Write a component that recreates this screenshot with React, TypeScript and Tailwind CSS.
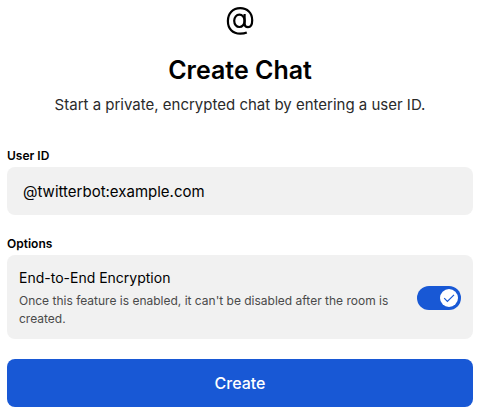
import {useState} from 'react';
import type {FormEvent} from 'react';

function MentionIcon() {
    return (
        <svg width="28" height="28" viewBox="0 0 28 28" fill="none" stroke="currentColor" strokeWidth="2.2" aria-hidden="true">
            <ellipse cx="13.4" cy="13.8" rx="5.2" ry="6.2"/>
            <path d="M18.6 7V16.8C18.6 19 20 20.1 22 20.1C25 20.1 26.2 17.2 26.2 13.2C26.2 5.8 21.4 1.2 14.2 1.2C6.8 1.2 1.9 6.4 1.9 14C1.9 21.8 6.6 26.7 14.2 26.7C16.6 26.7 18.8 26.4 20.8 25.6"/>
        </svg>
    );
}

interface EncryptionSwitchProps {
    checked: boolean;
    onChange: (checked: boolean) => void;
}

function EncryptionSwitch({checked, onChange}: EncryptionSwitchProps) {
    return (
        <span className="relative block h-6 w-11 shrink-0">
            <input
                id="encryption"
                type="checkbox"
                role="switch"
                aria-describedby="encryption-note"
                checked={checked}
                onChange={(e) => onChange(e.target.checked)}
                className="peer block h-6 w-11 cursor-pointer appearance-none rounded-full bg-gray-400 checked:bg-[#1858d5]"
            />
            <span className="pointer-events-none absolute top-[3px] left-[3px] flex size-[18px] items-center justify-center rounded-full bg-white text-[#1858d5] peer-checked:left-[23px]">
                {checked && (
                    <svg width="12" height="12" viewBox="0 0 12 12" fill="none" stroke="currentColor" strokeWidth="1.2" aria-hidden="true">
                        <path d="M1.2 6.2L4.4 9.4L11 2.8"/>
                    </svg>
                )}
            </span>
        </span>
    );
}

export default function App() {
    const [userId, setUserId] = useState('@twitterbot:example.com');
    const [encrypted, setEncrypted] = useState(true);

    const handleSubmit = (e: FormEvent) => {
        e.preventDefault();
    };

    return (
        <main className="bg-white pt-[7px] pr-[11px] pb-3 pl-[7px] font-['Inter',sans-serif] text-black">
            <header className="flex flex-col items-center text-center">
                <MentionIcon/>
                <h1 className="mt-5 text-[25px] leading-[30px] font-semibold">Create Chat</h1>
                <p className="mt-2 text-[15px] leading-6 text-[#2a2a2a]">
                    Start a private, encrypted chat by entering a user ID.
                </p>
            </header>

            <form className="mt-[30px] flex flex-col gap-5" onSubmit={handleSubmit}>
                <div className="flex flex-col gap-0.5">
                    <label htmlFor="user-id" className="text-xs leading-[18px] font-semibold">User ID</label>
                    <input
                        id="user-id"
                        type="text"
                        value={userId}
                        onChange={(e) => setUserId(e.target.value)}
                        className="h-12 w-full rounded-lg bg-[#f1f1f1] px-4 text-[15px] outline-none"
                    />
                </div>

                <section className="flex flex-col gap-0.5">
                    <h2 className="text-xs leading-[18px] font-semibold">Options</h2>
                    <div className="flex items-center gap-4 rounded-lg bg-[#f1f1f1] px-3 pt-3 pb-[11px]">
                        <div className="flex grow flex-col gap-[3px]">
                            <label htmlFor="encryption" className="text-sm leading-[22px]">End-to-End Encryption</label>
                            <p id="encryption-note" className="text-xs leading-[18px] text-[#4a4a4a]">
                                Once this feature is enabled, it can't be disabled after the room is created.
                            </p>
                        </div>
                        <EncryptionSwitch checked={encrypted} onChange={setEncrypted}/>
                    </div>
                </section>

                <button type="submit" className="h-12 w-full cursor-pointer rounded-lg bg-[#1858d5] text-base font-medium text-white">
                    Create
                </button>
            </form>
        </main>
    );
}
